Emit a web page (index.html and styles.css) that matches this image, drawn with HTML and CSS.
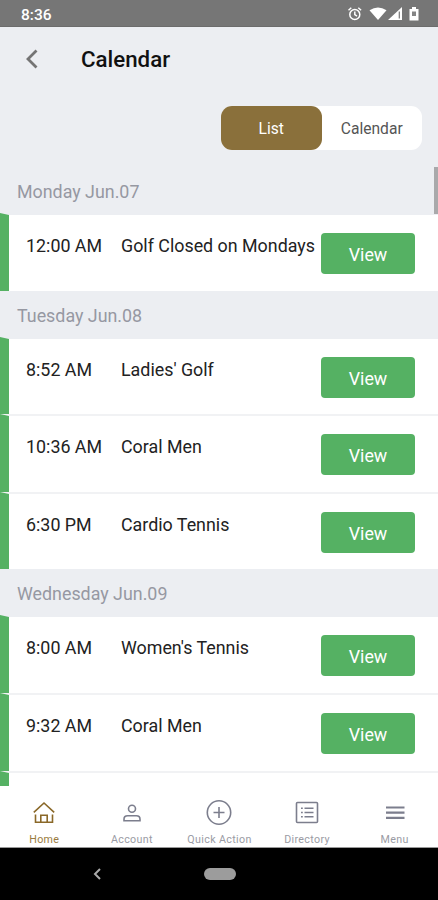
FILE: index.html
```
<!DOCTYPE html>
<html lang="en">
<head>
    <meta charset="UTF-8">
    <title>Calendar</title>
    <link rel="stylesheet" href="styles.css">
</head>
<body>
    <div class="status">
        <span class="clock">8:36</span>
        <svg class="status-icons" width="72" height="16" viewBox="0 0 72 16">
            <g fill="none" stroke="#fff" stroke-width="1.5">
                <circle cx="6.800" cy="8.500" r="5"/>
                <path d="M6.800 5.500v3.200l2.200 1.400M0.500 4.200l2.800-2.400M13.100 4.200L10.300 1.800"/>
            </g>
            <path d="M21.500 4.300Q30-1.200 38.500 4.300L30 14z" fill="#fff"/>
            <path d="M54 1v13H40z" fill="#fff"/>
            <path d="M51.300 5.500v7" stroke="#777" stroke-width="1.200"/>
            <path d="M61.500 3H64V1h4v2h2.500v11.500h-9z" fill="#fff"/>
            <path d="M64 5.500h4V10h-4z" fill="#858585"/>
        </svg>
    </div>
    <div class="header">
        <svg class="back" width="14" height="20" viewBox="0 0 14 20">
            <path d="M12.500 1.500L4 10l8.500 8.500" fill="none" stroke="#747474" stroke-width="2.800"/>
        </svg>
        <h1>Calendar</h1>
    </div>
    <div class="switch">
        <span class="current">List</span>
        <span>Calendar</span>
    </div>

    <div class="list">
        <h2>Monday Jun.07</h2>
        <ul>
            <li><span class="time">12:00 AM</span><span class="name">Golf Closed on Mondays</span><a class="view">View</a></li>
        </ul>
        <h2>Tuesday Jun.08</h2>
        <ul>
            <li><span class="time">8:52 AM</span><span class="name">Ladies' Golf</span><a class="view">View</a></li>
            <li><span class="time">10:36 AM</span><span class="name">Coral Men</span><a class="view">View</a></li>
            <li><span class="time">6:30 PM</span><span class="name">Cardio Tennis</span><a class="view">View</a></li>
        </ul>
        <h2>Wednesday Jun.09</h2>
        <ul>
            <li><span class="time">8:00 AM</span><span class="name">Women's Tennis</span><a class="view">View</a></li>
            <li><span class="time">9:32 AM</span><span class="name">Coral Men</span><a class="view">View</a></li>
            <li></li>
        </ul>
        <div class="scrollbar"></div>
    </div>

    <div class="tabs">
        <div class="tab active">
            <svg width="28" height="28" viewBox="0 0 28 28">
                <path d="M3.800 13.300L14 4l10.200 9.300M5.500 15.500v7.800h17v-7.800M10.800 23v-6.800h6.400V23"/>
            </svg>
            <span>Home</span>
        </div>
        <div class="tab">
            <svg width="28" height="28" viewBox="0 0 28 28">
                <circle cx="14" cy="9.700" r="3.500"/>
                <path d="M6 21.800v-1.600q0-3.400 3.600-3.400h8.800q3.600 0 3.600 3.400v1.600z"/>
            </svg>
            <span>Account</span>
        </div>
        <div class="tab">
            <svg width="28" height="28" viewBox="0 0 28 28">
                <circle cx="14" cy="13.500" r="11.700"/>
                <path d="M14 8v11M8.500 13.500h11"/>
            </svg>
            <span>Quick Action</span>
        </div>
        <div class="tab">
            <svg width="28" height="28" viewBox="0 0 28 28">
                <rect x="3.500" y="3.500" width="21" height="20" rx="1"/>
                <path d="M8 9.300h1.800M11.500 9.300h9M8 13.500h1.800M11.500 13.500h9M8 17.700h1.800M11.500 17.700h9"/>
            </svg>
            <span>Directory</span>
        </div>
        <div class="tab menu">
            <svg width="28" height="28" viewBox="0 0 28 28">
                <path d="M5 8.500h18.500M5 13.700h18.500M5 18.800h18.500"/>
            </svg>
            <span>Menu</span>
        </div>
    </div>

    <div class="system">
        <svg width="10" height="14" viewBox="0 0 10 14">
            <path d="M8 2L3 7l5 5" fill="none" stroke="#aaa" stroke-width="2"/>
        </svg>
        <span class="pill"></span>
    </div>
</body>
</html>
```

FILE: styles.css
```
*{
    padding: 0;
    margin: 0;
    box-sizing: border-box;
}
ul,li{
    list-style: none;
}
body{
    width: 438px;
    height: 900px;
    overflow: hidden;
    background-color: #eceef2;
    font-family: Roboto, sans-serif;
    display: flex;
    flex-direction: column;
}
.status{
    height: 27px;
    background-color: #767676;
    border-bottom: 1px solid #6c6c6c;
    color: #fff;
    display: flex;
    justify-content: space-between;
    padding: 6px 18px 0 21px;
}
.clock{
    font-size: 15.5px;
    font-weight: 500;
    line-height: 18px;
}
.header{
    height: 79px;
    display: flex;
    padding: 22px 0 0 24px;
}
.header h1{
    font-size: 22.3px;
    font-weight: 500;
    line-height: 21px;
    margin-left: 43px;
    color: #111;
}
.switch{
    width: 201px;
    height: 44px;
    margin: 0 16px 17px auto;
    flex-shrink: 0;
    display: flex;
    border-radius: 11px;
    background-color: #fff;
}
.switch span{
    flex: 1;
    text-align: center;
    line-height: 47px;
    font-size: 15.6px;
    color: #555;
}
.switch .current{
    border-radius: 11px;
    background-color: #8a703b;
    color: #fff;
}
.list{
    position: relative;
    height: 619px;
    flex-shrink: 0;
    overflow: hidden;
}
.list h2{
    height: 46px;
    padding-left: 17px;
    line-height: 49px;
    font-size: 17.85px;
    font-weight: 400;
    color: #9698a2;
}
.list li{
    height: 77.6px;
    border-top: 2px solid #f1f2f4;
    border-left: 9px solid #55b163;
    background-color: #fff;
    display: flex;
    padding: 18px 23px 0 17px;
    font-size: 17.85px;
    line-height: 25px;
    color: #222;
}
.list li:first-child{
    border-top-color: #eceef2;
}
.time{
    width: 95px;
}
.name{
    flex: 1;
    white-space: nowrap;
}
.view{
    width: 94px;
    height: 41px;
    border-radius: 4px;
    background-color: #55b163;
    text-align: center;
    line-height: 43px;
    color: #fff;
}
.scrollbar{
    position: absolute;
    top: 0;
    right: 0;
    width: 4px;
    height: 47px;
    background-color: #a9a9ab;
}
.tabs{
    height: 62px;
    flex-shrink: 0;
    display: flex;
    padding-top: 13px;
    background-color: #fff;
    border-bottom: 1px solid #999;
}
.tab{
    flex: 1;
    display: flex;
    flex-direction: column;
    align-items: center;
    color: #9a9ba4;
}
.tab svg{
    fill: none;
    stroke: #7c7e8d;
    stroke-width: 1.6;
    margin-left: 1px;
}
.tab span{
    margin-top: 6px;
    font-size: 10.7px;
    line-height: 13px;
    letter-spacing: 0.35px;
    margin-left: 1px;
    white-space: nowrap;
}
.tab.active{
    color: #9a7b40;
}
.active svg{
    stroke: #8a6828;
}
.menu svg{
    stroke-width: 2.2;
}
.system{
    flex: 1;
    display: flex;
    align-items: center;
    padding-left: 92px;
    background-color: #000;
}
.pill{
    width: 32px;
    height: 12px;
    margin-left: 102px;
    border-radius: 6px;
    background-color: #9c9c9c;
}
```
